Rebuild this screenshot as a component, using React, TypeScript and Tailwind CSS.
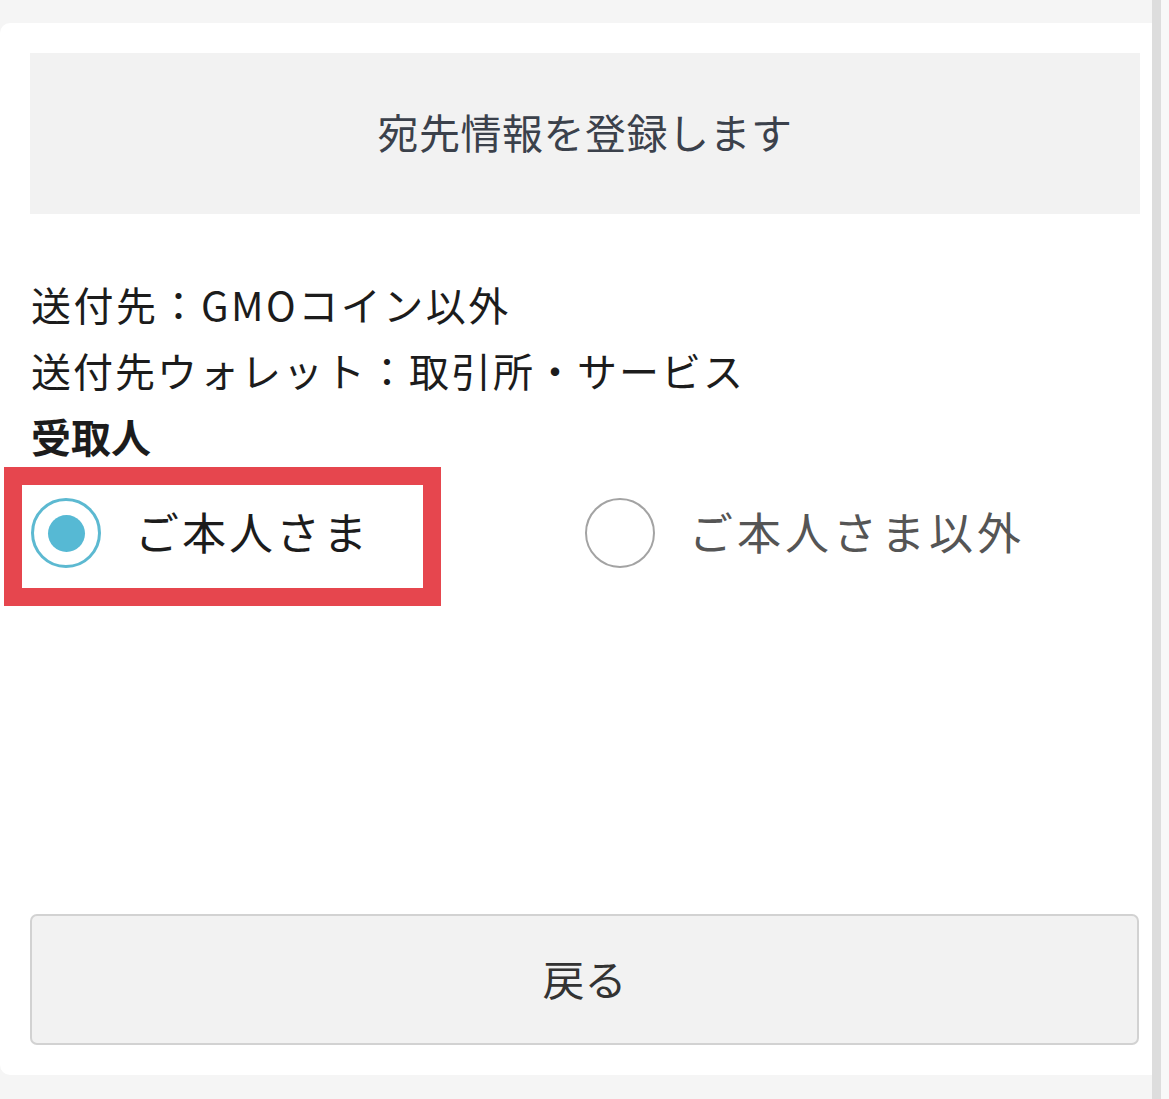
export default function App() {
  const font = { fontFamily: '"Noto Sans CJK JP", "Noto Sans", sans-serif' };
  return (
    <div className="flex h-[1099px] w-full bg-[#f5f5f5]" style={font}>
      <div className="flex w-[1152px] flex-col pt-[23px]">
        <div className="relative flex h-[1052px] flex-col rounded-l-[10px] bg-white">
          <div className="ml-[30px] mr-[12px] mt-[30px] flex h-[161px] items-center justify-center bg-[#f2f2f2]">
            <span className="mb-[4px] text-[41px] font-normal tracking-[0.5px] text-[#3b414b]">宛先情報を登録します</span>
          </div>
          <div className="mt-[57px] pl-[31px] text-[40px] leading-[66px] text-[#1c1c1c]">
            <div className="font-normal tracking-[2.5px]">送付先：GMOコイン以外</div>
            <div className="font-normal tracking-[2px]">送付先ウォレット：取引所・サービス</div>
            <div className="font-bold">受取人</div>
          </div>
          <div className="mt-[29px] flex h-[70px] items-center pl-[31px]">
            <div className="flex items-center">
              <div className="flex h-[70px] w-[70px] items-center justify-center rounded-full border-[3px] border-[#5cb9d1]">
                <div className="h-[37px] w-[37px] rounded-full bg-[#56b9d4]" />
              </div>
              <span className="mb-[4px] ml-[34px] text-[44px] font-normal tracking-[3px] text-[#1c1c1c]">ご本人さま</span>
            </div>
            <div className="ml-[215px] flex items-center">
              <div className="h-[70px] w-[70px] rounded-full border-[2px] border-[#a3a3a3]" />
              <span className="mb-[4px] ml-[34px] text-[44px] font-normal tracking-[4px] text-[#555555]">ご本人さま以外</span>
            </div>
          </div>
          <div className="pointer-events-none absolute left-[4px] top-[444px] h-[139px] w-[437px] border-[18px] border-[#e6464e]" />
          <div className="mb-[30px] ml-[30px] mr-[13px] mt-auto flex h-[131px] items-center justify-center rounded-[7px] border-2 border-[#d2d2d2] bg-[#f2f2f2]">
            <span className="mb-[5px] text-[42px] font-normal text-[#333333]">戻る</span>
          </div>
        </div>
      </div>
      <div className="h-full w-[9px] bg-[#dddddd]" />
      <div className="h-full flex-1 bg-[#f8f8f8]" />
    </div>
  );
}
